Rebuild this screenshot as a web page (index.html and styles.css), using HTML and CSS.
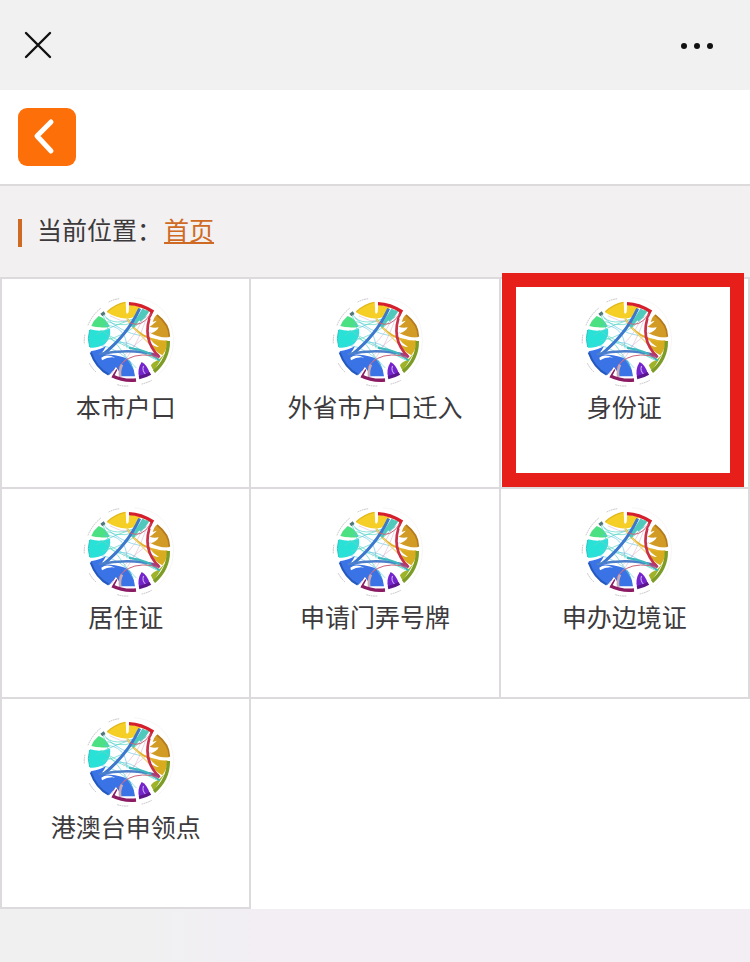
FILE: index.html
```html
<!DOCTYPE html>
<html lang="zh-CN">
<head>
    <meta charset="UTF-8">
    <meta name="viewport" content="width=device-width, initial-scale=1.0">
    <title>首页</title>
    <link rel="stylesheet" href="styles.css">
</head>
<body>
    <!-- shared chord diagram icon -->
    <svg class="sprite" aria-hidden="true">
        <symbol id="chord" viewBox="28 34 276 276" overflow="visible">
            <g fill="none" stroke="#c4c0c4" stroke-width="3">
                <path d="M114 52q15-8 33-10M52 122q13-32 39-52M41 176q-1-14 2-27M56 236q8 15 20 26M140 300q15 5 33 4M213 298q15-3 30-11" stroke-dasharray="5 2"/>
                <path d="M190 39q112 10 119 127q-2 70-50 108" stroke="#e6e1e3" stroke-width="1"/>
            </g>
            <path fill="#f5cf25" d="M109 83Q134 58 165 52L167 85Q170 91 174 82L176 58L210 68Q206 92 184 99Q149 108 109 83Z"/>
            <path fill="#4be082" d="M84 94Q109 103 117 126Q92 132 62 124Q69 106 84 94Z"/>
            <path fill="#28e2d7" d="M58 134Q91 143 118 132Q122 155 105 176Q85 191 58 189Q50 161 58 134Z"/>
            <path fill="#3a73e6" d="M60 200Q92 194 106 184Q101 197 91 207Q137 210 166 220Q187 231 193 275L149 275Q147 258 137 249Q127 257 116 271Q76 249 60 200Z"/>
            <path fill="#fff" d="M92 219Q107 206 134 219Q114 215 94 227Z"/>
            <path fill="#d29b25" d="M257 91Q297 119 295 158Q268 161 240 146Q259 140 264 128Q249 131 237 126Q253 114 258 108L246 112Q248 101 257 91Z"/>
            <path fill="#d9ac20" d="M238 162Q264 168 290 167Q290 194 275 212Q253 201 229 168Q252 188 265 187Q248 177 238 162Z"/>
            <path fill="#7523cc" d="M213 232Q229 239 238 268L206 281Q198 255 213 232Z"/>
            <path fill="#9fb329" d="M282 207L250 258L239 244Q247 231 264 225Z"/>
            <g fill="none" stroke-linecap="round">
                <path stroke="#5ad7c6" stroke-width="3" opacity=".7" d="M100 91Q125 132 212 94M111 111Q159 136 226 98M75 151Q145 112 219 96M95 169Q172 153 222 100M90 137Q142 170 256 225M101 142Q140 171 187 249M113 160Q170 187 249 219"/>
                <path stroke="#58c7e4" stroke-width="3" opacity=".6" d="M98 94Q129 150 99 181M106 100Q151 143 210 153M81 180Q148 189 198 251M117 188Q158 149 227 210M100 121Q167 122 169 190"/>
                <path stroke="#d6a3c2" stroke-width="2" opacity=".7" d="M222 88Q199 152 158 184M226 105Q196 194 147 245M160 213Q194 177 240 143M118 94Q183 130 236 91"/>
                <path stroke="#e3b02c" stroke-width="6" d="M171 104Q189 136 218 152Q239 164 265 168"/>
                <path stroke="#ecd67c" stroke-width="4" d="M168 100Q190 135 244 185"/>
                <path stroke="#50c9bc" stroke-width="11" stroke-linecap="butt" d="M220 74Q205 100 185 127M231 78Q222 94 206 106"/>
                <path stroke="#3c78cd" stroke-width="9" stroke-linecap="butt" d="M207 72Q169 153 93 213"/>
                <path stroke="#4b7ecb" stroke-width="8" d="M87 208Q177 190 261 211"/>
                <path stroke="#3eb9bd" stroke-width="6" d="M177 190Q231 196 265 226"/>
                <path stroke="#c9304a" stroke-width="8" stroke-linecap="butt" d="M243 82Q209 162 267 218"/>
                <path stroke="#ca5f78" stroke-width="3" d="M239 90Q211 131 179 115M145 248Q166 213 216 211Q250 211 261 220"/>
                <path stroke="#a83e83" stroke-width="6" d="M245 208L264 216"/>
                <path stroke="#c8a9b6" stroke-width="8" stroke-linecap="butt" d="M154 240Q145 258 149 276"/>
                <path stroke="#d5c3f1" stroke-width="3" d="M218 245Q213 259 226 270"/>
            </g>
            <!-- outer ring -->
            <g fill="none" stroke-width="10">
                <path stroke="#d51f2d" d="M175 57Q211 58 248 82"/>
                <path stroke="#b47a1d" stroke-width="5" d="M259 91Q296 119 296 156"/>
                <path stroke="#7c9c25" d="M293 169Q294 223 250 261"/>
                <path stroke="#5b168e" d="M205 279Q224 275 239 266"/>
                <path stroke="#8b1b63" d="M124 273Q158 290 196 286M127 270L136 253"/>
                <path stroke="#2458bd" stroke-width="6" d="M60 203Q76 249 114 270"/>
                <path stroke="#25c5c3" stroke-width="3" d="M57 136Q49 162 57 187"/>
                <path stroke="#e1b61c" stroke-width="4" d="M110 81Q134 59 164 53"/>
                <path stroke="#51787b" d="M92 91L102 84"/>
            </g>
            <path fill="none" stroke="#fff" stroke-width="5" d="M170 51V81M104 80L114 97M60 129L91 132M54 195L85 190M119 277L137 249M197 250L202 287M237 239L247 264M263 162L299 162M254 84L240 102"/>
        </symbol>
    </svg>

    <header class="topbar">
        <button type="button" class="icon-button" aria-label="关闭">
            <svg width="28" height="28" viewBox="0 0 28 28" fill="none" stroke="#111" stroke-width="2.4" stroke-linecap="round">
                <path d="M2 2l24 24M26 2L2 26"/>
            </svg>
        </button>
        <button type="button" class="icon-button" aria-label="更多">
            <svg width="34" height="8" viewBox="0 0 34 8" fill="#111">
                <circle cx="4" cy="5" r="3"/>
                <circle cx="17" cy="5" r="3"/>
                <circle cx="30" cy="5" r="3"/>
            </svg>
        </button>
    </header>

    <nav class="navbar">
        <button type="button" class="back-button" aria-label="返回">
            <svg width="58" height="58" viewBox="0 0 58 58" fill="none" stroke="#fff" stroke-width="5" stroke-linecap="round" stroke-linejoin="round">
                <path d="M33 14L19 28L33 43"/>
            </svg>
        </button>
    </nav>

    <div class="location">
        <span class="location-label">当前位置：</span>
        <a href="#" class="location-link">首页</a>
    </div>

    <main class="grid">
        <a href="#" class="tile">
            <svg class="tile-icon"><use href="#chord"/></svg>
            <span>本市户口</span>
        </a>
        <a href="#" class="tile">
            <svg class="tile-icon"><use href="#chord"/></svg>
            <span>外省市户口迁入</span>
        </a>
        <a href="#" class="tile tile-marked">
            <svg class="tile-icon"><use href="#chord"/></svg>
            <span>身份证</span>
        </a>
        <a href="#" class="tile">
            <svg class="tile-icon"><use href="#chord"/></svg>
            <span>居住证</span>
        </a>
        <a href="#" class="tile">
            <svg class="tile-icon"><use href="#chord"/></svg>
            <span>申请门弄号牌</span>
        </a>
        <a href="#" class="tile">
            <svg class="tile-icon"><use href="#chord"/></svg>
            <span>申办边境证</span>
        </a>
        <a href="#" class="tile">
            <svg class="tile-icon"><use href="#chord"/></svg>
            <span>港澳台申领点</span>
        </a>
    </main>
</body>
</html>
```

FILE: styles.css
```css
* {
    margin: 0;
    padding: 0;
    box-sizing: border-box;
}

body {
    min-height: 100vh;
    background: linear-gradient(90deg, #f0f0f1 20%, #f2eef4 35%);
    color: #3c3a3c;
    font-family: "Noto Sans CJK SC", "Noto Sans", sans-serif;
    font-size: 25px;
    line-height: 36px;
}

button {
    border: none;
    background: none;
    cursor: pointer;
}

.sprite {
    display: none;
}

.topbar {
    display: flex;
    justify-content: space-between;
    align-items: center;
    height: 90px;
    padding: 0 36px 0 24px;
    background: #f1f1f1;
}

.icon-button {
    display: flex;
}

.navbar {
    padding: 18px;
    background: #fff;
    border-bottom: 2px solid #dcdadb;
}

.back-button {
    display: block;
    width: 58px;
    height: 58px;
    border-radius: 9px;
    background: #fd6f09;
}

.location {
    display: flex;
    padding: 25px 18px 30px;
    background: #f2f0f1;
}

.location-label {
    display: flex;
    align-items: flex-end;
}

.location-label::before {
    content: '';
    width: 4px;
    height: 28px;
    margin-right: 15px;
    background: #cf6a24;
}

.location-link {
    margin-left: 2px;
    color: #cf6a24;
    text-decoration-thickness: 2px;
    text-underline-offset: 2px;
}

.grid {
    display: grid;
    grid-template-columns: repeat(3, 1fr);
    background: #fff;
    border-top: 2px solid #dcdadc;
    border-left: 2px solid #dcdadc;
}

.tile {
    position: relative;
    display: flex;
    flex-direction: column;
    align-items: center;
    height: 210px;
    padding-top: 17px;
    border-right: 2px solid #dcdadc;
    border-bottom: 2px solid #dcdadc;
    color: inherit;
    text-decoration: none;
    white-space: nowrap;
}

.tile-icon {
    width: 92px;
    height: 92px;
    overflow: visible;
}

/* red frame around the highlighted entry */
.tile-marked::after {
    content: '';
    position: absolute;
    top: -6px;
    right: 4px;
    bottom: 0;
    left: 1px;
    border: 14px solid #e71f1b;
}
```
